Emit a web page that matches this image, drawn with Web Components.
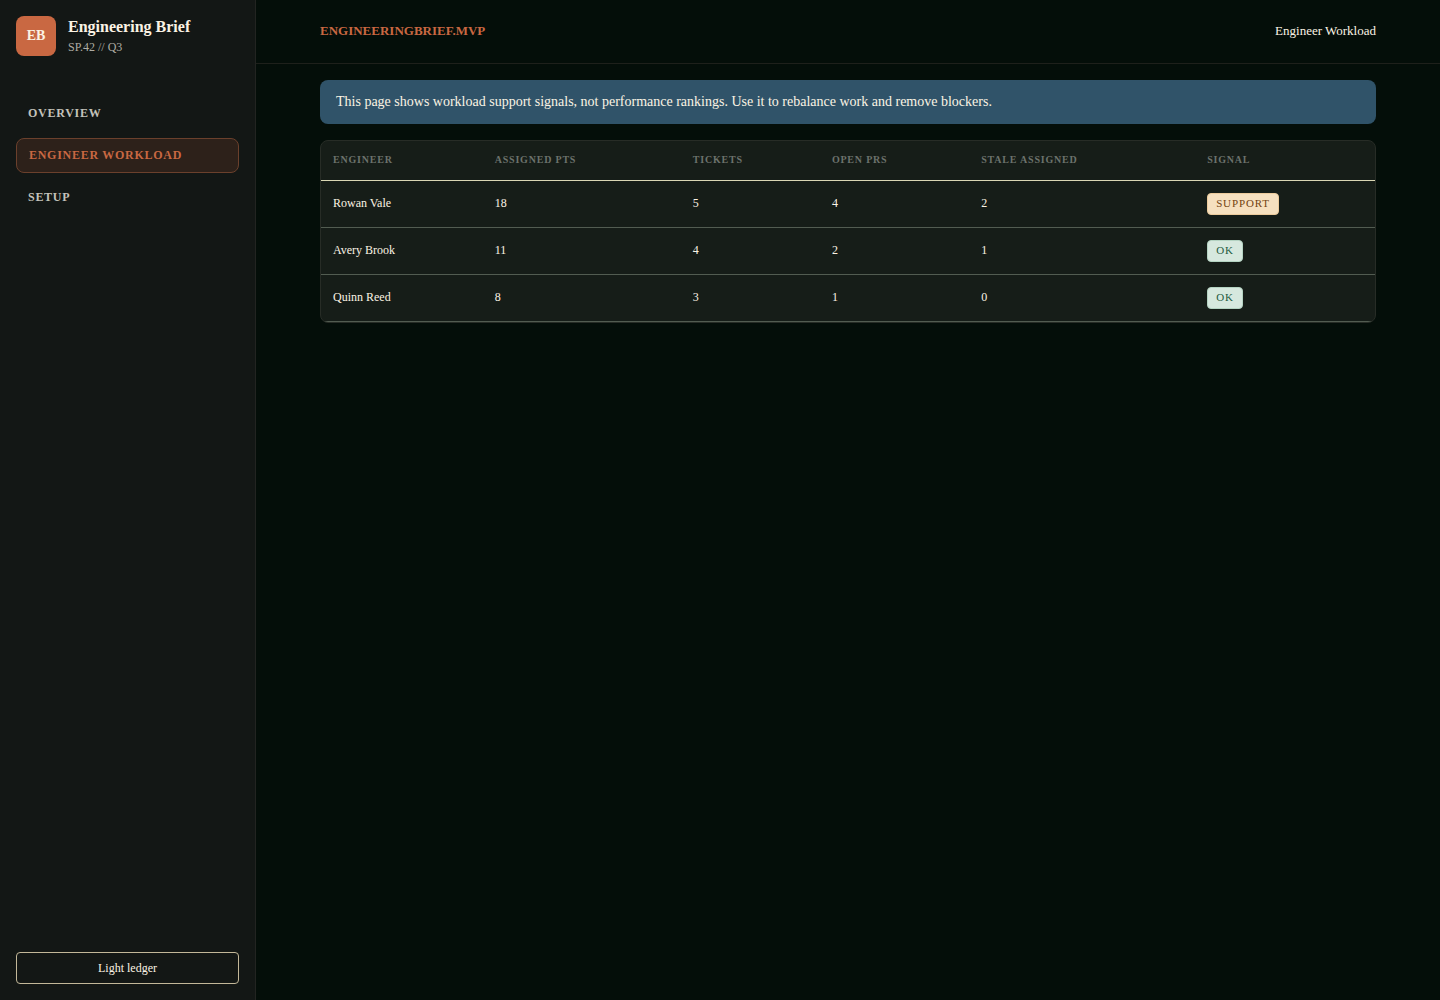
<!DOCTYPE html>
<html lang="en">
<head>
<meta charset="utf-8">
<meta name="viewport" content="width=device-width, initial-scale=1">
<title>Engineering Brief</title>
<style>
  html, body { margin: 0; }
  body {
    --accent: #c96842;
    --cream: #fbf3e4;
    background: #040e09;
    color: var(--cream);
    font-family: "Liberation Serif", "Times New Roman", serif;
    font-size: 14px;
    line-height: 20px;
  }
</style>
</head>
<body>
<brief-app>
  <brief-sidebar slot="sidebar">
    <brief-brand slot="brand" mark="EB"><span slot="name">Engineering Brief</span><span slot="sprint">SP.42 // Q3</span></brief-brand>
    <nav-item href="#overview">Overview</nav-item>
    <nav-item href="#workload" active>Engineer Workload</nav-item>
    <nav-item href="#setup">Setup</nav-item>
    <ledger-button slot="footer">Light ledger</ledger-button>
  </brief-sidebar>
  <brief-topbar slot="topbar"><span slot="product">ENGINEERINGBRIEF.MVP</span>Engineer Workload</brief-topbar>
  <info-note>This page shows workload support signals, not performance rankings. Use it to rebalance work and remove blockers.</info-note>
  <workload-table></workload-table>
</brief-app>

<script>
const define = (name, html, setup) => {
  const template = document.createElement('template');
  template.innerHTML = html;
  customElements.define(name, class extends HTMLElement {
    constructor() {
      super();
      this.attachShadow({ mode: 'open' }).append(template.content.cloneNode(true));
    }
    connectedCallback() { if (setup) setup(this, this.shadowRoot); }
  });
};

define('brief-app', `
  <style>
    :host { display: grid; grid-template-columns: 256px minmax(0, 1fr); min-height: 100vh; }
    .page { display: flex; flex-direction: column; }
    main { display: flex; flex-direction: column; gap: 16px; padding: 16px 64px; }
  </style>
  <slot name="sidebar"></slot>
  <div class="page">
    <slot name="topbar"></slot>
    <main><slot></slot></main>
  </div>`);

define('brief-sidebar', `
  <style>
    :host {
      display: flex; flex-direction: column; box-sizing: border-box;
      position: sticky; top: 0; height: 100vh; padding: 16px;
      background: #131715; border-right: 1px solid #222421;
    }
    nav { display: flex; flex-direction: column; gap: 8px; margin-top: 40px; flex: 1; }
  </style>
  <slot name="brand"></slot>
  <nav aria-label="Main"><slot></slot></nav>
  <slot name="footer"></slot>`);

define('brief-brand', `
  <style>
    :host { display: flex; align-items: flex-start; gap: 12px; }
    .mark {
      display: grid; place-items: center; width: 40px; height: 40px;
      border-radius: 8px; background: var(--accent); font-weight: 700;
    }
    .text { display: flex; flex-direction: column; padding-top: 1px; }
    .name { font-size: 16px; line-height: 20px; font-weight: 700; }
    .sprint { font-size: 12px; line-height: 20px; color: #aeaca3; }
  </style>
  <div class="mark"></div>
  <div class="text">
    <div class="name"><slot name="name"></slot></div>
    <div class="sprint"><slot name="sprint"></slot></div>
  </div>`, (host, root) => {
  root.querySelector('.mark').textContent = host.getAttribute('mark');
});

define('nav-item', `
  <style>
    :host { display: block; }
    a {
      display: block; padding: 8px 12px; border-radius: 8px;
      font-size: 12px; line-height: 17px; font-weight: 700; letter-spacing: 0.06em;
      text-transform: uppercase; text-decoration: none; color: #c4c3bb;
    }
    :host([active]) a { border: 1px solid #6b402c; background: #2d211a; color: var(--accent); }
  </style>
  <a><slot></slot></a>`, (host, root) => {
  const link = root.querySelector('a');
  link.href = host.getAttribute('href');
  if (host.hasAttribute('active')) link.setAttribute('aria-current', 'page');
});

define('ledger-button', `
  <style>
    :host { display: block; }
    button {
      width: 100%; padding: 6px 12px; border: 1px solid #c3b899; border-radius: 4px;
      background: transparent; color: inherit; font: inherit; font-size: 12px; line-height: 18px;
      cursor: pointer;
    }
  </style>
  <button type="button"><slot></slot></button>`);

define('brief-topbar', `
  <style>
    :host {
      display: flex; align-items: center; justify-content: space-between; box-sizing: border-box;
      height: 64px; padding: 0 64px 2px; border-bottom: 1px solid #1e201b; font-size: 13px;
    }
    strong { color: var(--accent); }
  </style>
  <strong><slot name="product"></slot></strong>
  <span><slot></slot></span>`);

define('info-note', `
  <style>
    :host { display: block; padding: 12px 16px; border-radius: 8px; background: #305369; }
  </style>
  <slot></slot>`);

define('signal-badge', `
  <style>
    :host {
      display: inline-block; box-sizing: border-box; padding: 0 8px 2px; border: 1px solid #b4d3c2; border-radius: 4px;
      background: #d6e8de; color: #245a40;
      font-size: 11px; line-height: 18px; letter-spacing: 0.08em; text-transform: uppercase; vertical-align: top;
    }
    :host([kind="support"]) { background: #f6e0bf; border-color: #eccb9c; color: #73430f; }
  </style>
  <slot></slot>`);

const engineers = [
  ['Rowan Vale', 18, 5, 4, 2, 'Support'],
  ['Avery Brook', 11, 4, 2, 1, 'OK'],
  ['Quinn Reed', 8, 3, 1, 0, 'OK'],
];

define('workload-table', `
  <style>
    :host {
      display: block; overflow: hidden; border: 1px solid #272c26; border-radius: 8px;
      background: #161d18;
    }
    table { width: 100%; border-collapse: separate; border-spacing: 0; }
    th {
      padding: 11px 12px 13px; border-bottom: 1px solid #dad7b4; text-align: left;
      font-size: 10px; line-height: 15px; letter-spacing: 0.08em; text-transform: uppercase; color: #6c726c;
    }
    td {
      padding: 12px; border-bottom: 1px solid #525c51; vertical-align: top;
      font-size: 12px; line-height: 20px;
    }
  </style>
  <table>
    <thead><tr>
      <th scope="col">Engineer</th><th scope="col">Assigned pts</th><th scope="col">Tickets</th>
      <th scope="col">Open PRs</th><th scope="col">Stale assigned</th><th scope="col">Signal</th>
    </tr></thead>
    <tbody></tbody>
  </table>`, (host, root) => {
  root.querySelector('tbody').innerHTML = engineers.map(row => {
    const signal = row[5];
    const cells = row.slice(0, 5).map(value => `<td>${value}</td>`).join('');
    return `<tr>${cells}<td><signal-badge kind="${signal.toLowerCase()}">${signal}</signal-badge></td></tr>`;
  }).join('');
});
</script>
</body>
</html>
